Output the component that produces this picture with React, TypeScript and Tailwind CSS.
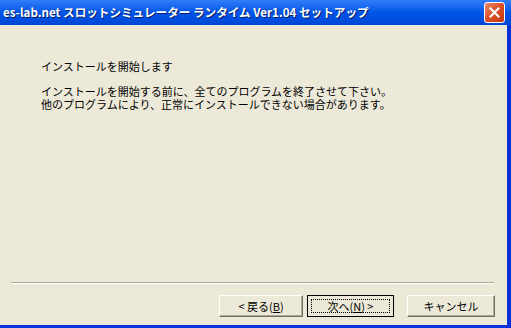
import React from "react";

const jp = { fontFamily: '"Noto Sans CJK JP", "Liberation Sans", sans-serif' };

const CloseButton = () => (
  <div className="w-[21px] h-[21px] rounded-[3px] border border-white bg-gradient-to-br from-[#e98a6c] via-[#dd4b22] to-[#c33a12] flex items-center justify-center">
    <svg width="11" height="11" viewBox="0 0 11 11">
      <path d="M1.5 1.5 L9.5 9.5 M9.5 1.5 L1.5 9.5" stroke="white" strokeWidth="2.2" strokeLinecap="square" />
    </svg>
  </div>
);

const App = () => {
  return (
    <div className="w-[511px] h-[328px] bg-[#0831d9] flex flex-col overflow-hidden" style={jp}>
      <div className="h-[25px] shrink-0 bg-gradient-to-b from-[#2f7df8] via-[#0055e8] to-[#0047d6] flex items-center justify-between pl-[3px] pr-[6px]">
        <p className="text-white font-bold text-[11.6px] leading-none whitespace-nowrap [text-shadow:1px_1px_0_#0a1e6a]">
          es-lab.net スロットシミュレーター ランタイム Ver1.04 セットアップ
        </p>
        <CloseButton />
      </div>
      <div className="flex-1 mr-[4px] mb-[3px] bg-[#ece9d8] flex flex-col">
        <div className="pl-[41px] pt-[35px] text-[11px] leading-[13px] text-black">
          <p>インストールを開始します</p>
          <p className="mt-[12px]">インストールを開始する前に、全てのプログラムを終了させて下さい。</p>
          <p>他のプログラムにより、正常にインストールできない場合があります。</p>
        </div>
        <div className="flex-1" />
        <div className="ml-[11px] w-[483px] h-[2px] border-t border-t-[#aca899] border-b border-b-white" />
        <div className="flex items-center pl-[219px] pt-[11px] pb-[8px] text-[11px]">
          <button className="shrink-0 w-[84px] h-[22px] bg-[#ece9d8] border-t border-l border-white border-b border-r border-b-[#716f64] border-r-[#716f64] shadow-[inset_-1px_-1px_0_#aca899] flex items-center justify-center">
            &lt; 戻る(<span className="underline">B</span>)
          </button>
          <button className="shrink-0 ml-[4px] w-[87px] h-[22px] bg-[#ece9d8] border border-black flex items-center justify-center p-[3px]">
            <span className="w-full h-full border border-dotted border-black flex items-center justify-center">
              次へ(<span className="underline">N</span>) &gt;
            </span>
          </button>
          <button className="shrink-0 ml-[13px] w-[88px] h-[22px] bg-[#ece9d8] border-t border-l border-white border-b border-r border-b-[#716f64] border-r-[#716f64] shadow-[inset_-1px_-1px_0_#aca899] flex items-center justify-center">
            キャンセル
          </button>
        </div>
      </div>
    </div>
  );
};

export default App;
